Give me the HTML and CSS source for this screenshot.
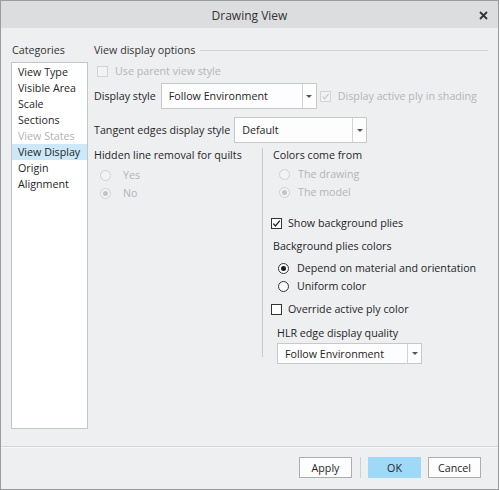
FILE: index.html
```html
<!DOCTYPE html>
<html>
<head>
<meta charset="utf-8">
<link rel="stylesheet" href="styles.css">
</head>
<body>
<div class="window">
  <div class="titlebar">
    <span class="title">Drawing View</span>
    <span class="close"><svg width="9" height="9" viewBox="0 0 9 9"><path d="M1 1L8 8M8 1L1 8" stroke="#333" stroke-width="1.8"/></svg></span>
  </div>
  <div class="content">
    <div class="categories">
      <div class="cat-label">Categories</div>
      <div class="cat-list">
        <div class="cat-item">View Type</div>
        <div class="cat-item">Visible Area</div>
        <div class="cat-item">Scale</div>
        <div class="cat-item">Sections</div>
        <div class="cat-item disabled">View States</div>
        <div class="cat-item selected">View Display</div>
        <div class="cat-item">Origin</div>
        <div class="cat-item">Alignment</div>
      </div>
    </div>
    <div class="panel">
      <div class="group-head"><span>View display options</span><span class="rule"></span></div>
      <div class="row use-parent disabled">
        <span class="cb cb-dis"></span><span class="lbl">Use parent view style</span>
      </div>
      <div class="row display-row">
        <span class="field-label">Display style</span>
        <div class="dropdown dd-display"><span class="dd-text">Follow Environment</span><span class="dd-arrow"><span class="tri"></span></span></div>
        <span class="cb cb-dis checked-dis"><svg width="9" height="9" viewBox="0 0 9 9"><path d="M1.5 4.5L3.6 6.8L7.6 1.8" fill="none" stroke="#c4c4c4" stroke-width="1.1"/></svg></span>
        <span class="lbl disabled active-ply">Display active ply in shading</span>
      </div>
      <div class="row tangent-row">
        <span class="field-label">Tangent edges display style</span>
        <div class="dropdown dd-tangent"><span class="dd-text">Default</span><span class="dd-arrow"><span class="tri"></span></span></div>
      </div>
      <div class="columns">
        <div class="col-left">
          <div class="sub-head">Hidden line removal for quilts</div>
          <div class="radio-row disabled yes"><span class="radio radio-dis"></span><span class="lbl">Yes</span></div>
          <div class="radio-row disabled yes"><span class="radio radio-dis on"></span><span class="lbl">No</span></div>
        </div>
        <div class="vsep"></div>
        <div class="col-right">
          <div class="sub-head">Colors come from</div>
          <div class="radio-row disabled indent"><span class="radio radio-dis"></span><span class="lbl">The drawing</span></div>
          <div class="radio-row disabled indent"><span class="radio radio-dis on"></span><span class="lbl">The model</span></div>
          <div class="check-row show-bg"><span class="cb"><svg width="9" height="9" viewBox="0 0 9 9"><path d="M1.3 4.6L3.5 7L7.8 1.6" fill="none" stroke="#222" stroke-width="1.3"/></svg></span><span class="lbl">Show background plies</span></div>
          <div class="sub-head bg-colors">Background plies colors</div>
          <div class="radio-row indent2 first"><span class="radio on"></span><span class="lbl">Depend on material and orientation</span></div>
          <div class="radio-row indent2"><span class="radio"></span><span class="lbl">Uniform color</span></div>
          <div class="check-row override"><span class="cb"></span><span class="lbl">Override active ply color</span></div>
          <div class="sub-head hlr">HLR edge display quality</div>
          <div class="dropdown dd-hlr"><span class="dd-text">Follow Environment</span><span class="dd-arrow"><span class="tri"></span></span></div>
        </div>
      </div>
    </div>
  </div>
  <div class="footer">
    <button class="btn">Apply</button>
    <span class="btn-sep"></span>
    <button class="btn btn-ok">OK</button>
    <button class="btn btn-cancel">Cancel</button>
  </div>
</div>
</body>
</html>
```
FILE: styles.css
```css
* { box-sizing: border-box; }
html, body { margin: 0; padding: 0; background: #ffffff; }
body {
  font-family: "Open Sans", "Noto Sans", sans-serif;
  font-size: 10.7px;
  color: #262626;
}
.window {
  width: 499px;
  height: 490px;
  border: 1px solid #9c9c9c;
  background: #eeeff1;
  display: flex;
  flex-direction: column;
}
.titlebar {
  height: 27px;
  background: #dcdddf;
  display: flex;
  align-items: center;
  justify-content: center;
  position: relative;
  flex: none;
}
.title { font-size: 12px; color: #333; padding-top: 1px; }
.close {
  position: absolute;
  right: 10px;
  top: 10px;
  width: 9px;
  height: 9px;
  display: flex;
}
.content {
  flex: 1;
  display: flex;
  padding: 14px 10px 0 10px;
  border-bottom: 1px solid #d6d6d8;
}
.categories { width: 77px; flex: none; display: flex; flex-direction: column; }
.cat-label { height: 16px; line-height: 16px; padding-left: 1px; color: #333; }
.cat-list {
  margin-top: 4px;
  height: 367px;
  background: #ffffff;
  border: 1px solid #c5c5c7;
  padding-top: 1px;
}
.cat-item { height: 16px; line-height: 16px; padding-left: 6px; color: #262626; }
.cat-item.disabled { color: #b3b3b3; }
.cat-item.selected { background: #cce8f9; }
.panel { flex: 1; min-width: 0; margin-left: 6px; display: flex; flex-direction: column; }
.group-head { display: flex; align-items: center; height: 16px; line-height: 16px; color: #333; }
.group-head .rule { flex: 1; height: 1px; background: #d3d3d5; margin-left: 5px; margin-top: 1px; margin-right: 0; }
.row { display: flex; align-items: center; }
.disabled, .disabled .lbl { color: #b5b5b5; }
.use-parent { height: 16px; margin-top: 5px; padding-left: 3px; }
.use-parent .lbl { margin-left: 7px; }
.cb {
  width: 11px; height: 11px;
  border: 1px solid #333;
  background: #fff;
  display: inline-flex;
  align-items: center;
  justify-content: center;
  flex: none;
}
.cb-dis { border-color: #d3d3d3; background: #f3f3f4; }
.display-row { height: 26px; margin-top: 4px; }
.field-label { color: #262626; }
.dropdown {
  background: #fdfdfd;
  border: 1px solid #c8c8ca;
  display: flex;
  align-items: stretch;
}
.dd-text { flex: 1; display: flex; align-items: center; padding-left: 7px; color: #262626; }
.dd-arrow {
  width: 14px;
  border-left: 1px solid #d3d3d5;
  display: flex;
  align-items: center;
  justify-content: center;
}
.tri {
  width: 0; height: 0;
  border-left: 3px solid transparent;
  border-right: 3px solid transparent;
  border-top: 3px solid #555;
}
.dd-display { width: 156px; height: 26px; margin-left: 5px; }
.display-row .cb-dis { margin-left: 3px; width: 11px; height: 11px; }
.active-ply { margin-left: 7px; }
.tangent-row { height: 26px; margin-top: 8px; }
.dd-tangent { width: 133px; height: 26px; margin-left: 4px; }
.columns { display: flex; margin-top: 4px; align-items: flex-start; }
.col-left { width: 168px; flex: none; }
.vsep { width: 1px; height: 209px; background: #c9c9cb; margin-top: 1px; flex: none; }
.col-right {
  padding-left: 10px;
  flex: 1;
  margin-top: 1px;
}
.col-right .sub-head:first-child { margin-top: -1px; }
.sub-head { height: 16px; line-height: 16px; color: #262626; }
.radio-row { display: flex; align-items: center; height: 18px; }
.radio-row.yes { padding-left: 6px; margin-top: 3px; }
.radio-row.yes + .radio-row.yes { margin-top: 0; }
.radio-row.yes .lbl { margin-left: 12px; }
.radio-row.indent { padding-left: 6px; margin-top: 0; }
.col-right .sub-head + .radio-row.indent { margin-top: 2px; }
.radio-row.indent .lbl { margin-left: 8px; }
.radio {
  width: 11px; height: 11px;
  border-radius: 50%;
  border: 1px solid #333;
  background: #fff;
  display: inline-flex;
  align-items: center;
  justify-content: center;
  flex: none;
}
.radio.on::after {
  content: "";
  width: 5px; height: 5px;
  border-radius: 50%;
  background: #1a1a1a;
}
.radio-dis { border-color: #d0d0d0; background: #f3f3f4; }
.radio-dis.on::after { background: #c4c4c4; }
.check-row { display: flex; align-items: center; height: 16px; margin-left: -2px; }
.check-row .lbl { margin-left: 6px; }
.show-bg { margin-top: 14px; }
.bg-colors { margin-top: 7px; }
.radio-row.indent2 { padding-left: 5px; height: 18px; }
.radio-row.indent2.first { margin-top: 5px; }
.radio-row.indent2 .lbl { margin-left: 8px; }
.override { margin-top: 6px; }
.hlr { margin-top: 8px; padding-left: 4px; }
.dd-hlr { width: 145px; height: 21px; margin-left: 4px; margin-top: 2px; }
.footer {
  height: 42px;
  flex: none;
  display: flex;
  align-items: center;
  justify-content: flex-end;
  padding-right: 17px;
  padding-bottom: 2px;
  border-top: 1px solid #f7f7f8;
}
.btn {
  font-family: "Open Sans", "Noto Sans", sans-serif;
  font-size: 10.7px;
  color: #262626;
  width: 53px;
  height: 21px;
  background: #fdfdfd;
  border: 1px solid #adadad;
  padding: 0;
}
.btn-sep { width: 1px; height: 21px; background: #d0d0d2; margin: 0 7px 0 8px; }
.btn-ok { background: #9ed9f8; border-color: #9ed9f8; width: 53px; }
.btn-cancel { margin-left: 7px; }
```
